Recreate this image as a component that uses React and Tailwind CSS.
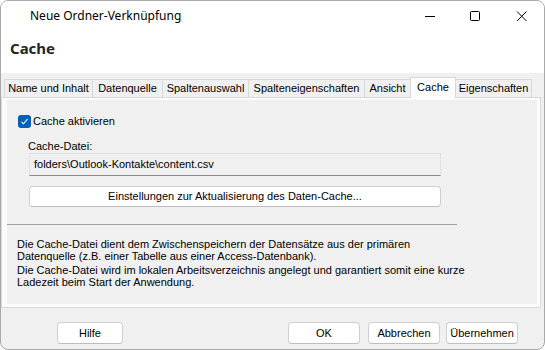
const tabs = [
  { label: "Name und Inhalt", w: "w-[89px]" },
  { label: "Datenquelle", w: "w-[71px]" },
  { label: "Spaltenauswahl", w: "w-[87px]" },
  { label: "Spalteneigenschaften", w: "w-[117px]" },
  { label: "Ansicht", w: "w-[47px]" },
  { label: "Cache", w: "w-[46px]", active: true },
  { label: "Eigenschaften", w: "w-[77px]" },
];

function DlgButton({ children, className = "" }) {
  return (
    <button
      className={
        "h-[22px] rounded-[4px] border border-[#d0d0d0] border-b-[#bdbdbd] bg-white text-[11px] text-black " +
        className
      }
    >
      {children}
    </button>
  );
}

export default function App() {
  return (
    <div className="h-[350px] w-[545px] bg-white" style={{ fontFamily: '"Liberation Sans", Arial, sans-serif' }}>
      <div className="flex h-[350px] w-[545px] flex-col overflow-hidden rounded-[8px] border border-[#a9a9a9] bg-[#f0f0f0]">
        {/* title bar */}
        <div className="flex h-[30px] shrink-0 items-center bg-white">
          <span className="pl-[29px] text-[12px] text-black" style={{ fontFamily: '"Noto Sans", sans-serif' }}>
            Neue Ordner-Verknüpfung
          </span>
          <div className="ml-auto flex items-center">
            <svg width="46" height="30" viewBox="0 0 46 30" className="text-black">
              <path d="M19 15.5h10" stroke="currentColor" strokeWidth="1" />
            </svg>
            <svg width="46" height="30" viewBox="0 0 46 30">
              <rect x="18.5" y="10.5" width="9" height="9" rx="1" fill="none" stroke="black" strokeWidth="1" />
            </svg>
            <svg width="46" height="30" viewBox="0 0 46 30">
              <path d="M19 10.5l9.5 9.5M28.5 10.5L19 20" stroke="black" strokeWidth="1" />
            </svg>
          </div>
        </div>

        {/* header */}
        <div className="h-[42px] shrink-0 bg-white pl-[9px] pt-[6px]">
          <span className="text-[15px] font-bold text-[#262626]" style={{ fontFamily: '"Noto Sans", sans-serif' }}>
            Cache
          </span>
        </div>

        {/* body */}
        <div className="flex flex-1 flex-col pt-[4px]">
          <div className="flex h-[20px] items-end pl-[3px]">
            {tabs.map((t, i) =>
              t.active ? (
                <div
                  key={t.label}
                  className={
                    t.w +
                    " relative z-10 -mb-px -ml-px flex h-[21px] items-start justify-center border border-b-0 border-[#d9d9d9] bg-[#fcfcfc] pt-[1px] text-[11px] text-black"
                  }
                >
                  {t.label}
                </div>
              ) : (
                <div
                  key={t.label}
                  className={
                    t.w +
                    (i > 0 ? " -ml-px" : "") +
                    " flex h-[18px] items-center justify-center border border-b-0 border-[#d9d9d9] bg-[#f0f0f0] text-[11px] text-black"
                  }
                >
                  {t.label}
                </div>
              )
            )}
          </div>

          <div className="mr-[3px] h-[211px] border border-[#d9d9d9] bg-[#fcfcfc] pb-[3px] pl-[5px] pr-[3px] pt-[2px]">
            <div className="flex h-full flex-col bg-[#f0f0f0] text-[11px] text-black">
              <div className="mt-[15px] flex items-center pl-[11px]">
                <span className="flex h-[13px] w-[13px] items-center justify-center rounded-[3px] bg-[#005fb8]">
                  <svg width="9" height="9" viewBox="0 0 9 9">
                    <path d="M1.5 4.8l2 2 4-4.6" fill="none" stroke="white" strokeWidth="1.1" />
                  </svg>
                </span>
                <span className="ml-[2px] leading-[13px]">Cache aktivieren</span>
              </div>

              <div className="mt-[12px] pl-[21px] leading-[12px]">Cache-Datei:</div>

              <div className="ml-[22px] mt-px flex h-[23px] w-[412px] items-center border border-[#e2e2e2] border-b-[#8a8a8a] bg-[#f0f0f0] pl-[4px]">
                folders\Outlook-Kontakte\content.csv
              </div>

              <DlgButton className="ml-[22px] mt-[10px] w-[412px] !h-[21px]">
                Einstellungen zur Aktualisierung des Daten-Cache...
              </DlgButton>

              <div className="mt-[17px] h-px w-[450px] bg-[#a0a0a0]" />

              <div className="mt-[14px] pl-[10px] leading-[11.5px]">
                <p>Die Cache-Datei dient dem Zwischenspeichern der Datensätze aus der primären</p>
                <p>Datenquelle (z.B. einer Tabelle aus einer Access-Datenbank).</p>
                <p className="mt-[3px]">
                  Die Cache-Datei wird im lokalen Arbeitsverzeichnis angelegt und garantiert somit eine kurze
                </p>
                <p>Ladezeit beim Start der Anwendung.</p>
              </div>
            </div>
          </div>

          <div className="mt-[14px] flex">
            <DlgButton className="ml-[56px] w-[66px]">Hilfe</DlgButton>
            <DlgButton className="ml-[165px] w-[72px]">OK</DlgButton>
            <DlgButton className="ml-[8px] w-[72px]">Abbrechen</DlgButton>
            <DlgButton className="ml-[6px] w-[72px]">Übernehmen</DlgButton>
          </div>
        </div>
      </div>
    </div>
  );
}
